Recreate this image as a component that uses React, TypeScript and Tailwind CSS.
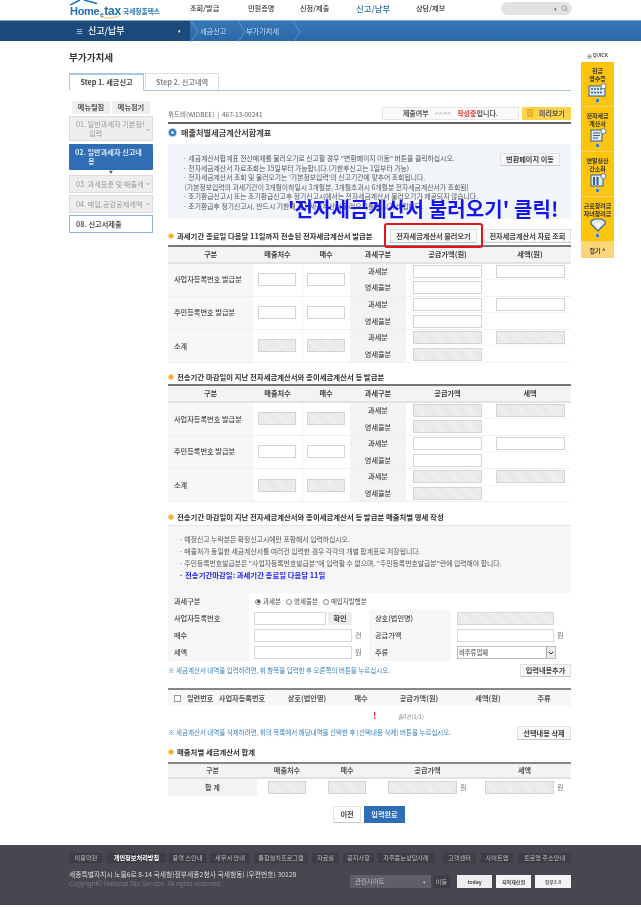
import { ChevronDown, Menu, Search } from "lucide-react";

const KR = "font-['Noto_Sans_CJK_KR','Liberation_Sans',sans-serif]";
const HATCH =
  "bg-[repeating-linear-gradient(45deg,#e6e6e6,#e6e6e6_1px,#f1f1f1_1px,#f1f1f1_2px)]";

function Field({ off, w = "w-[38px]", flush }: { off?: boolean; w?: string; flush?: boolean }) {
  return (
    <div
      className={`${w} h-[13px] ${flush ? "shrink-0" : "mx-auto"} border border-[#d4d4d4] ${off ? HATCH : "bg-white"}`}
    />
  );
}

function SectionTitle({ children }: { children: React.ReactNode }) {
  return (
    <div className="flex items-center gap-[3px] text-[7.4px] font-bold text-[#333] leading-[10px] whitespace-nowrap">
      <span className="w-[6px] h-[6px] rounded-full bg-[#f5a623] border border-[#fbd38a] shrink-0" />
      {children}
    </div>
  );
}

function GrayButton({ children, className = "" }: { children: React.ReactNode; className?: string }) {
  return (
    <div
      className={`flex items-center justify-center whitespace-nowrap bg-[#f8f8f8] border border-[#e2e2e2] border-b-[#c9c9c9] text-[7.2px] font-semibold text-[#444] ${className}`}
    >
      {children}
    </div>
  );
}

type Row = {
  label: string;
  count: boolean;
  amount: boolean;
  tax: boolean;
};

function IssueTable({ rows, unit }: { rows: Row[]; unit: boolean }) {
  return (
    <table className="w-[403px] table-fixed border-collapse border-t-2 border-t-[#777] text-[7.2px] text-[#444]">
      <colgroup>
        <col className="w-[85px]" />
        <col className="w-[49px]" />
        <col className="w-[48px]" />
        <col className="w-[56px]" />
        <col className="w-[83px]" />
        <col className="w-[82px]" />
      </colgroup>
      <thead>
        <tr className="h-[17px] bg-[#f3f3f2] border-b-2 border-b-[#e2e2e2]">
          <th className="font-semibold">구분</th>
          <th className="font-semibold">매출처수</th>
          <th className="font-semibold">매수</th>
          <th className="font-semibold">과세구분</th>
          <th className="font-semibold">공급가액{unit ? "(원)" : ""}</th>
          <th className="font-semibold">세액{unit ? "(원)" : ""}</th>
        </tr>
      </thead>
      {rows.map((r) => (
        <tbody key={r.label} className="border-b border-b-[#f0f0f0]">
          <tr className="h-[16.6px] border-b border-b-[#f6f6f6]">
            <td rowSpan={2} className="bg-[#f7f7f6] pl-[6px] font-medium whitespace-nowrap">
              {r.label}
            </td>
            <td rowSpan={2} className="border-r border-r-[#f3f3f3]">
              <Field off={r.count} />
            </td>
            <td rowSpan={2}>
              <Field off={r.count} />
            </td>
            <td className="bg-[#f3f3f3] text-center font-medium">과세분</td>
            <td>
              <Field off={r.amount} w="w-[69px]" />
            </td>
            <td>
              <Field off={r.tax} w="w-[69px]" />
            </td>
          </tr>
          <tr className="h-[16.6px]">
            <td className="bg-[#f3f3f3] text-center font-medium">영세율분</td>
            <td>
              <Field off={r.amount} w="w-[69px]" />
            </td>
            <td />
          </tr>
        </tbody>
      ))}
    </table>
  );
}

function Radio({ on, label }: { on?: boolean; label: string }) {
  return (
    <span className="flex items-center gap-[2px] whitespace-nowrap">
      <span className="w-[6px] h-[6px] rounded-full border border-[#888] bg-white flex items-center justify-center">
        {on && <span className="w-[3px] h-[3px] rounded-full bg-[#444]" />}
      </span>
      {label}
    </span>
  );
}

function QuickItem({ title, icon }: { title: string[]; icon: React.ReactNode }) {
  return (
    <div className="h-[45px] flex flex-col items-center pt-[5px] border-b border-b-[#f3d46a]">
      <div className="text-[6px] leading-[7.6px] font-bold text-center text-[#333] whitespace-nowrap">
        {title.map((t) => (
          <div key={t}>{t}</div>
        ))}
      </div>
      <div className="mt-[1px] h-[14px]">{icon}</div>
      <span className="w-[5px] h-[5px] rounded-full bg-[#2f6db0] border border-white/60 mt-[1px]" />
    </div>
  );
}

function QuickIcon({ kind }: { kind: number }) {
  if (kind === 3) {
    return (
      <svg width="20" height="14" viewBox="0 0 20 14">
        <path d="M3 3 L7 1 H13 L17 3 V6 L10 13 L3 6 Z" fill="#dfe9f3" stroke="#33618f" strokeWidth="1.2" />
        <path d="M10 9.5 L6.8 6.3 Q6.8 4.2 8.8 4.4 L10 5.4 L11.2 4.4 Q13.2 4.2 13.2 6.3 Z" fill="#fff" />
      </svg>
    );
  }
  return (
    <svg width="20" height="14" viewBox="0 0 20 14">
      {kind === 0 && (
        <>
          <rect x="1" y="3" width="16" height="10" fill="#dfe9f3" stroke="#33618f" />
          <path d="M3 6h11M3 9.5h11" stroke="#33618f" strokeWidth="1.4" strokeDasharray="2 1" />
        </>
      )}
      {kind === 1 && (
        <>
          <rect x="3" y="2" width="11" height="11" fill="#dfe9f3" stroke="#33618f" />
          <path d="M5 5h7M5 7.5h7M5 10h5" stroke="#33618f" strokeWidth="1" />
        </>
      )}
      {kind === 2 && (
        <>
          <rect x="3" y="2" width="12" height="11" fill="#dfe9f3" stroke="#33618f" />
          <path d="M6 4v8M9.5 4v8" stroke="#33618f" strokeWidth="2" />
        </>
      )}
      <circle cx="15.5" cy="3.2" r="2.6" fill="#fff" stroke="#33618f" strokeWidth="0.8" />
    </svg>
  );
}

function Crumb() {
  return (
    <svg width="9" height="21" viewBox="0 0 9 21" className="shrink-0">
      <path d="M1 0 L8 10.5 L1 21" fill="none" stroke="#6d9ccb" strokeWidth="0.8" />
    </svg>
  );
}

const footerLinks = [
  { label: "이용약관", w: "w-[32px] ml-[1px]" },
  { label: "개인정보처리방침", w: "w-[59px] ml-[5px] font-bold text-white" },
  { label: "용역 스안내", w: "w-[37px] ml-[3px]" },
  { label: "세무서 안내", w: "w-[40px] ml-[4px]" },
  { label: "통합설치프로그램", w: "w-[54px] ml-[4px]" },
  { label: "자료실", w: "w-[27px] ml-[4px]" },
  { label: "공지사항", w: "w-[31px] ml-[4px]" },
  { label: "자주묻는상담사례", w: "w-[56px] ml-[4px]" },
  { label: "고객센터", w: "w-[33px] ml-[9px]" },
  { label: "사이트맵", w: "w-[32px] ml-[5px]" },
  { label: "토로명 주소안내", w: "w-[53px] ml-[5px]" },
];

const listCols = ["w-[26px]", "w-[58px]", "w-[72px]", "w-[36px]", "w-[80px]", "w-[58px]", "w-[54px]"];
const listHeads = ["일련번호", "사업자등록번호", "상호(법인명)", "매수", "공급가액(원)", "세액(원)", "주류"];

export default function App() {
  return (
    <div className={`w-[641px] min-h-[908px] bg-white relative blur-[0.55px] ${KR}`}>
      {/* Header */}
      <header className="h-[20px] relative overflow-hidden flex items-center pl-[70px]">
        <div className="w-[120px] h-[20px] flex items-end pb-[3px] text-[#1f6fb5] font-['Liberation_Sans',sans-serif] font-bold text-[11px] leading-[12px] relative shrink-0">
          <svg className="absolute left-0 top-0" width="50" height="20" viewBox="0 0 50 20">
            <path d="M0 5 L10 0 M14 0 L27 3.5" stroke="#1f6fb5" strokeWidth="1.4" fill="none" />
            <path d="M30 16.5 Q39 20 49 16" stroke="#f2b632" strokeWidth="0.9" fill="none" />
          </svg>
          <span className="tracking-[-0.3px]">Home</span>
          <span className="text-[7px] leading-[8px] -mb-[2px] px-[0.5px]">e</span>
          <span className="text-[12px] tracking-[-0.2px]">tax</span>
          <span className={`${KR} text-[6.7px] leading-[12px] ml-[2px] whitespace-nowrap text-[#2a77b8]`}>국세청홈택스</span>
        </div>
        <nav className="flex items-center text-[7.2px] font-medium text-[#333] -mt-[3px] whitespace-nowrap">
          <span className="w-[58px]">조회/발급</span>
          <span className="w-[52px]">민원증명</span>
          <span className="w-[56px]">신청/제출</span>
          <span className="w-[60px] text-[8.4px] leading-[10px] text-[#2c6ca8]">신고/납부</span>
          <span className="w-[40px]">상담/제보</span>
        </nav>
        <div className="absolute left-[501px] top-[2px] w-[71px] h-[13px] rounded-full bg-[#e2e2e2] flex items-center justify-end pr-[4px] gap-[4px]">
          <span className="text-[#2c6ca8] text-[5px]">▾</span>
          <Search size={7} className="text-[#777]" />
        </div>
      </header>

      {/* Blue bar */}
      <div className="h-[21px] border-t border-t-[#7aa6d1] bg-[linear-gradient(#3877b6,#2a68a8)] flex">
        <div className="w-[190px] bg-[#1c4a7b] pl-[76px] flex items-center text-white text-[9px] font-medium gap-[5px] whitespace-nowrap">
          <Menu size={7} />
          신고/납부
          <span className="ml-[48px] text-[5px]">▾</span>
        </div>
        <div className="flex items-center text-[7.2px] text-[#c8dcef] whitespace-nowrap">
          <Crumb />
          <span className="w-[37px] ml-[1px]">세금신고</span>
          <Crumb />
          <span className="w-[46px]">부가가치세</span>
          <Crumb />
        </div>
      </div>

      <div className="flex pl-[69px]">
        {/* Content column */}
        <div className="w-[502px]">
          <h1 className="text-[9.6px] font-bold text-[#333] mt-[11px] leading-[10px]">부가가치세</h1>

          {/* Tabs */}
          <div className="flex mt-[11px] h-[18px] border-b border-b-[#a9c6e6] text-[7.2px] font-semibold">
            <div className="w-[75px] h-[18px] bg-white border border-[#a9c6e6] border-b-white border-t-2 flex items-center justify-center text-[#444]">
              Step 1. 세금신고
            </div>
            <div className="w-[74px] h-[17px] ml-[1px] bg-white border border-[#d5dfe9] border-b-0 flex items-center justify-center text-[#888]">
              Step 2. 신고내역
            </div>
          </div>

          <div className="flex mt-[10px]">
            {/* Side menu */}
            <aside className="w-[84px] text-[7.2px] shrink-0">
              <div className="flex gap-[2px] pl-[3px] font-semibold text-[#555]">
                <span className="w-[38px] h-[13px] bg-[#eeeeee] flex items-center justify-center">메뉴펼침</span>
                <span className="w-[38px] h-[13px] bg-[#eeeeee] flex items-center justify-center">메뉴접기</span>
              </div>
              <div className="mt-[2px] h-[25px] bg-[#eeeeee] border border-[#dcdcdc] pt-[3px] pl-[6px] text-[#999] leading-[9px] relative overflow-hidden">
                <span className="block w-[68px] h-[9px] overflow-hidden whitespace-nowrap">01. 일반과세자 기본정보</span>
                <span className="block pl-[13px]">입력</span>
                <ChevronDown size={6} className="absolute right-[1px] top-[10px] text-[#666]" />
              </div>
              <div className="mt-[3px] h-[26px] bg-[#2f6db4] rounded-[1px] pt-[4px] pl-[6px] text-[#dbe8f5] font-semibold leading-[9px] whitespace-nowrap overflow-hidden">
                02. 일반과세자 신고내<br /><span className="pl-[13px]">용</span>
              </div>
              <div className="h-[5px] flex justify-center text-[4px] leading-[5px] text-[#555]">▼</div>
              <div className="h-[18px] bg-[#eeeeee] border border-[#dcdcdc] flex items-center pl-[6px] text-[#999] relative whitespace-nowrap overflow-hidden">
                <span className="w-[68px] overflow-hidden">03. 과세표준 및 매출세액</span>
                <ChevronDown size={6} className="absolute right-[1px] top-[5px] text-[#666]" />
              </div>
              <div className="mt-[2px] h-[18px] bg-[#eeeeee] border border-[#dcdcdc] flex items-center pl-[6px] text-[#999] relative whitespace-nowrap overflow-hidden">
                <span className="w-[68px] overflow-hidden">04. 매입,공감공제세액</span>
                <ChevronDown size={6} className="absolute right-[1px] top-[5px] text-[#666]" />
              </div>
              <div className="mt-[2px] h-[18px] bg-white border border-[#8fb4dc] flex items-center pl-[6px] font-semibold text-[#555]">
                08. 신고서제출
              </div>
            </aside>

            {/* Main form */}
            <main className="w-[403px] ml-[15px] relative">
              <div className="flex items-center h-[14px] mt-[5px] text-[6.5px] text-[#666] whitespace-nowrap">
                <span className="mt-[3px]">위드비(WIDBEE) &nbsp;|&nbsp; 467-13-00241</span>
                <div className="ml-auto flex items-center gap-[3px]">
                  <div className="w-[137px] h-[13px] bg-[#fafafa] border border-[#e6e6e6] flex items-center justify-center gap-[6px] text-[7px] font-semibold text-[#555]">
                    제출여부 <span className="text-[#bbb]">&gt;&gt;&gt;&gt;</span>
                    <span><span className="text-[#ee3a3a]">작성중</span>입니다.</span>
                  </div>
                  <div className="w-[49px] h-[13px] bg-[#fcd34d] flex items-center text-[7px] font-bold text-[#555]">
                    <span className="w-[6px] h-[8px] ml-[5px] bg-[#f2b632] border border-[#eab308]" />
                    <span className="ml-[6px]">미리보기</span>
                  </div>
                </div>
              </div>
              <div className="h-[2px] bg-[#666] mt-[2px]" />

              <div className="flex items-center gap-[5px] mt-[3px] h-[11px] text-[8.2px] font-bold text-[#444] pl-[1px]">
                <span className="w-[7px] h-[7px] rounded-full bg-white border-2 border-[#2d78c0] ring-1 ring-[#2d78c0]/40" />
                매출처별세금계산서합계표
              </div>

              <div className="mt-[6px] h-[75px] bg-[#f2f6fb] pl-[15px] pt-[10px] text-[6.85px] leading-[9.5px] text-[#555] relative whitespace-nowrap">
                <p>· 세금계산서합계표 전산매체를 불러오기로 신고할 경우 "변환페이지 이동" 버튼을 클릭하십시오.</p>
                <p>· 전자세금계산서 자료조회는 15일부터 가능합니다.(기한후신고는 1일부터 가능)</p>
                <p>· 전자세금계산서 조회 및 불러오기는 '기본정보입력'의 신고기간에 맞추어 조회됩니다.</p>
                <p>&nbsp;(기본정보입력의 과세기간이 3개월이하일시 3개월분, 3개월초과시 6개월분 전자세금계산서가 조회됨)</p>
                <p>· 조기환급신고시 또는 조기환급신고후 정기신고시에서는 전자세금계산서 불러오기가 제공되지 않습니다.</p>
                <p>· 조기환급후 정기신고시, 반드시 기한내 전자세금계산서 불러오기를 하시기 바랍니다.</p>
                <GrayButton className="absolute right-[11px] top-[9px] w-[60px] h-[13px]">변환페이지 이동</GrayButton>
              </div>

              <div className="flex items-center mt-[10px] h-[14px]">
                <SectionTitle>과세기간 종료일 다음달 11일까지 전송된 전자세금계산서 발급분</SectionTitle>
                <GrayButton className="w-[87px] h-[14px] ml-auto">전자세금계산서 불러오기</GrayButton>
                <GrayButton className="w-[87px] h-[14px] ml-[7px]">전자세금계산서 자료 조회</GrayButton>
              </div>
              <div className="mt-[2px]">
                <IssueTable
                  unit
                  rows={[
                    { label: "사업자등록번호 발급분", count: false, amount: false, tax: false },
                    { label: "주민등록번호 발급분", count: false, amount: false, tax: false },
                    { label: "소계", count: true, amount: true, tax: true },
                  ]}
                />
              </div>

              <div className="mt-[9px]">
                <SectionTitle>전송기간 마감일이 지난 전자세금계산서와 종이세금계산서 등 발급분</SectionTitle>
              </div>
              <div className="mt-[2px]">
                <IssueTable
                  unit={false}
                  rows={[
                    { label: "사업자등록번호 발급분", count: true, amount: true, tax: true },
                    { label: "주민등록번호 발급분", count: false, amount: false, tax: false },
                    { label: "소계", count: true, amount: true, tax: true },
                  ]}
                />
              </div>

              <div className="mt-[10px]">
                <SectionTitle>전송기간 마감일이 지난 전자세금계산서와 종이세금계산서 등 발급분 매출처별 명세 작성</SectionTitle>
              </div>
              <div className="mt-[3px] h-[68px] bg-[#f6f6f6] border-t border-t-[#e6e6e6] pl-[11px] pt-[7px] text-[6.85px] leading-[12px] text-[#555] whitespace-nowrap">
                <p>· 예정신고 누락분은 확정신고시에만 포함해서 입력하십시오.</p>
                <p>· 매출처가 동일한 세금계산서를 여러건 입력한 경우 각각의 개별 합계표로 저장됩니다.</p>
                <p>· 주민등록번호발급분은 "사업자등록번호발급분"에 입력할 수 없으며, "주민등록번호발급분"란에 입력해야 합니다.</p>
                <p className="font-bold text-[#1d1df0] text-[7.4px]">· 전송기간마감일: 과세기간 종료일 다음달 11일</p>
              </div>

              {/* Entry form */}
              <div className="grid grid-cols-[81px_120px_82px_120px] auto-rows-[17px] text-[7.2px] text-[#444] font-medium">
                <div className="bg-[#f7f7f6] pl-[6px] flex items-center">과세구분</div>
                <div className="col-span-3 pl-[6px] flex items-center gap-[5px] text-[6.5px] text-[#666]">
                  <Radio on label="과세분" />
                  <Radio label="영세율분" />
                  <Radio label="매입자발행분" />
                </div>
                <div className="bg-[#f7f7f6] pl-[6px] flex items-center">사업자등록번호</div>
                <div className="pl-[5px] flex items-center gap-[2px]">
                  <div className="w-[72px] h-[13px] border border-[#d8d8d8]" />
                  <span className="w-[24px] h-[13px] bg-[#eeeeee] flex items-center justify-center font-semibold">확인</span>
                </div>
                <div className="bg-[#f7f7f6] pl-[6px] flex items-center">상호(법인명)</div>
                <div className="pl-[6px] flex items-center">
                  <div className={`w-[97px] h-[13px] border border-[#d8d8d8] ${HATCH}`} />
                </div>
                <div className="bg-[#f7f7f6] pl-[6px] flex items-center">매수</div>
                <div className="pl-[5px] flex items-center gap-[3px] text-[#888]">
                  <div className="w-[98px] h-[13px] border border-[#d8d8d8]" />건
                </div>
                <div className="bg-[#f7f7f6] pl-[6px] flex items-center">공급가액</div>
                <div className="pl-[6px] flex items-center gap-[3px] text-[#888]">
                  <div className="w-[97px] h-[13px] border border-[#d8d8d8]" />원
                </div>
                <div className="bg-[#f7f7f6] pl-[6px] flex items-center">세액</div>
                <div className="pl-[5px] flex items-center gap-[3px] text-[#888]">
                  <div className="w-[98px] h-[13px] border border-[#d8d8d8]" />원
                </div>
                <div className="bg-[#f7f7f6] pl-[6px] flex items-center">주류</div>
                <div className="pl-[6px] flex items-center">
                  <div className="w-[99px] h-[13px] border border-[#bbb] flex items-center justify-between pl-[1px] text-[6.3px] text-[#555]">
                    비주류업체
                    <span className="w-[9px] h-[11px] bg-[#eee] border-l border-l-[#aaa] flex items-center justify-center">
                      <ChevronDown size={8} strokeWidth={3} className="text-[#222]" />
                    </span>
                  </div>
                </div>
              </div>

              <div className="flex items-center justify-between mt-[3px] h-[13px] text-[6.5px] text-[#3b82b8] whitespace-nowrap">
                <span>※ 세금계산서 내역을 입력하려면, 위 항목을 입력한 후 오른쪽의 버튼을 누르십시오.</span>
                <GrayButton className="w-[51px] h-[13px]">입력내용추가</GrayButton>
              </div>

              <div className="mt-[11px] h-[18px] border-t-2 border-t-[#888] bg-[#f7f7f7] flex items-center text-[7.2px] font-semibold text-[#555] text-center whitespace-nowrap">
                <span className="w-[19px] flex justify-center">
                  <span className="w-[7px] h-[7px] border border-[#999] bg-white" />
                </span>
                {listHeads.map((h, i) => (
                  <span key={h} className={listCols[i]}>
                    {h}
                  </span>
                ))}
              </div>
              <div className="h-[20px] relative flex items-center justify-center text-[5.6px] text-[#888] pl-[83px] pt-[3px]">
                <span className="absolute left-[205px] top-[3px] text-[9px] font-bold text-[#ef2b2b]">!</span>
                총0건(1/1)
              </div>
              <div className="flex items-center justify-between h-[14px] text-[6.5px] text-[#3b82b8] whitespace-nowrap">
                <span>※ 세금계산서 내역을 삭제하려면, 위의 목록에서 해당내역을 선택한 후 [선택내용 삭제] 버튼을 누르십시오.</span>
                <GrayButton className="w-[54px] h-[14px]">선택내용 삭제</GrayButton>
              </div>

              <div className="mt-[7px]">
                <SectionTitle>매출처별 세금계산서 합계</SectionTitle>
              </div>
              <div className="mt-[5px] border-t-2 border-t-[#888] text-[7.2px] font-semibold text-[#555]">
                <div className="h-[15px] bg-[#f3f3f2] border-b-2 border-b-[#e2e2e2] grid grid-cols-[89px_60px_60px_101px_93px] items-center text-center">
                  <span>구분</span>
                  <span>매출처수</span>
                  <span>매수</span>
                  <span>공급가액</span>
                  <span>세액</span>
                </div>
                <div className="h-[17px] grid grid-cols-[89px_60px_60px_101px_93px] items-center text-center">
                  <span className="bg-[#f3f3f2] h-full flex items-center justify-center font-bold">합 계</span>
                  <Field off />
                  <Field off />
                  <div className="flex items-center pl-[11px] gap-[3px] font-normal text-[#888]">
                    <Field off flush w="w-[69px]" />원
                  </div>
                  <div className="flex items-center pl-[7px] gap-[3px] font-normal text-[#888]">
                    <Field off flush w="w-[69px]" />원
                  </div>
                </div>
              </div>

              <div className="flex justify-center gap-[3px] mt-[10px] pr-[1px]">
                <GrayButton className="w-[28px] h-[17px] bg-white border-[#ddd]">이전</GrayButton>
                <div className="w-[41px] h-[17px] bg-[#2f6db4] text-[#dce9f6] flex items-center justify-center text-[7.2px] font-semibold">
                  입력완료
                </div>
              </div>
            </main>
          </div>
        </div>

        {/* Quick menu */}
        <aside className="w-[33px] ml-[10px] shrink-0">
          <div className="mt-[9px] h-[12px] flex items-center justify-center gap-[1px] text-[4.8px] font-bold text-[#555] font-['Liberation_Sans',sans-serif]">
            <Menu size={5} strokeWidth={3} />
            QUICK
          </div>
          <div className="bg-[#fcc40a]">
            <QuickItem title={["현금", "영수증"]} icon={<QuickIcon kind={0} />} />
            <QuickItem title={["전자세금", "계산서"]} icon={<QuickIcon kind={1} />} />
            <QuickItem title={["연말정산", "간소화"]} icon={<QuickIcon kind={2} />} />
            <QuickItem title={["근로장려금", "자녀장려금"]} icon={<QuickIcon kind={3} />} />
            <div className="h-[16px] bg-[#fbd678] flex items-center justify-center text-[6px] font-bold text-[#444]">
              접기 ^
            </div>
          </div>
        </aside>
      </div>

      {/* Footer */}
      <footer className="mt-[22px] h-[60px] bg-[#46474f] pl-[69px] pt-[8px] text-[#b9b9bd]">
        <div className="flex items-center text-[6.2px]">
          {footerLinks.map((l) => (
            <span
              key={l.label}
              className={`h-[10px] bg-[#3d3e45] flex items-center justify-center whitespace-nowrap overflow-hidden ${l.w}`}
            >
              {l.label}
            </span>
          ))}
        </div>
        <div className="flex mt-[7px]">
          <div className="w-[281px] shrink-0">
            <p className="text-[6.8px] leading-[9px] text-[#ddd] whitespace-nowrap">
              세종특별자치시 노을6로 8-14 국세청(정부세종2청사 국세청동) (우편번호) 30128
            </p>
            <p className="text-[6.6px] leading-[10px] text-[#77787f] font-['Liberation_Sans',sans-serif] whitespace-nowrap">
              Copyright© National Tax Service. All rights reserved.
            </p>
          </div>
          <div className="flex items-center mt-[5px] h-[13px]">
            <div className="w-[81px] h-[13px] bg-[#5e5f68] flex items-center justify-between px-[5px] text-[6.4px]">
              관련사이트 <span className="text-[5px]">▾</span>
            </div>
            <div className="w-[17px] h-[13px] ml-[2px] bg-[#3d3e45] flex items-center justify-center text-[6.2px]">이동</div>
            <div className="w-[35px] h-[13px] ml-[7px] bg-[#eee] text-[#444] text-[5px] font-bold flex items-center justify-center">today</div>
            <div className="w-[35px] h-[13px] ml-[4px] bg-[#f4f4f4] text-[#444] text-[5px] font-bold flex items-center justify-center whitespace-nowrap">지적재산권</div>
            <div className="w-[36px] h-[13px] ml-[4px] bg-[#f4f4f4] text-[#666] text-[5px] font-bold flex items-center justify-center">정부3.0</div>
          </div>
        </div>
      </footer>

      {/* Overlay annotations added to the screenshot */}
      <div className="absolute left-[288px] top-[197px] text-[20px] leading-[24px] font-bold tracking-[0.1px] text-[#1414f0] whitespace-nowrap">
        '전자세금계산서 불러오기' 클릭!
      </div>
      <div className="absolute left-[384px] top-[223px] w-[99px] h-[25px] border-[2px] border-[#e8101a] rounded-[3px]" />
    </div>
  );
}
